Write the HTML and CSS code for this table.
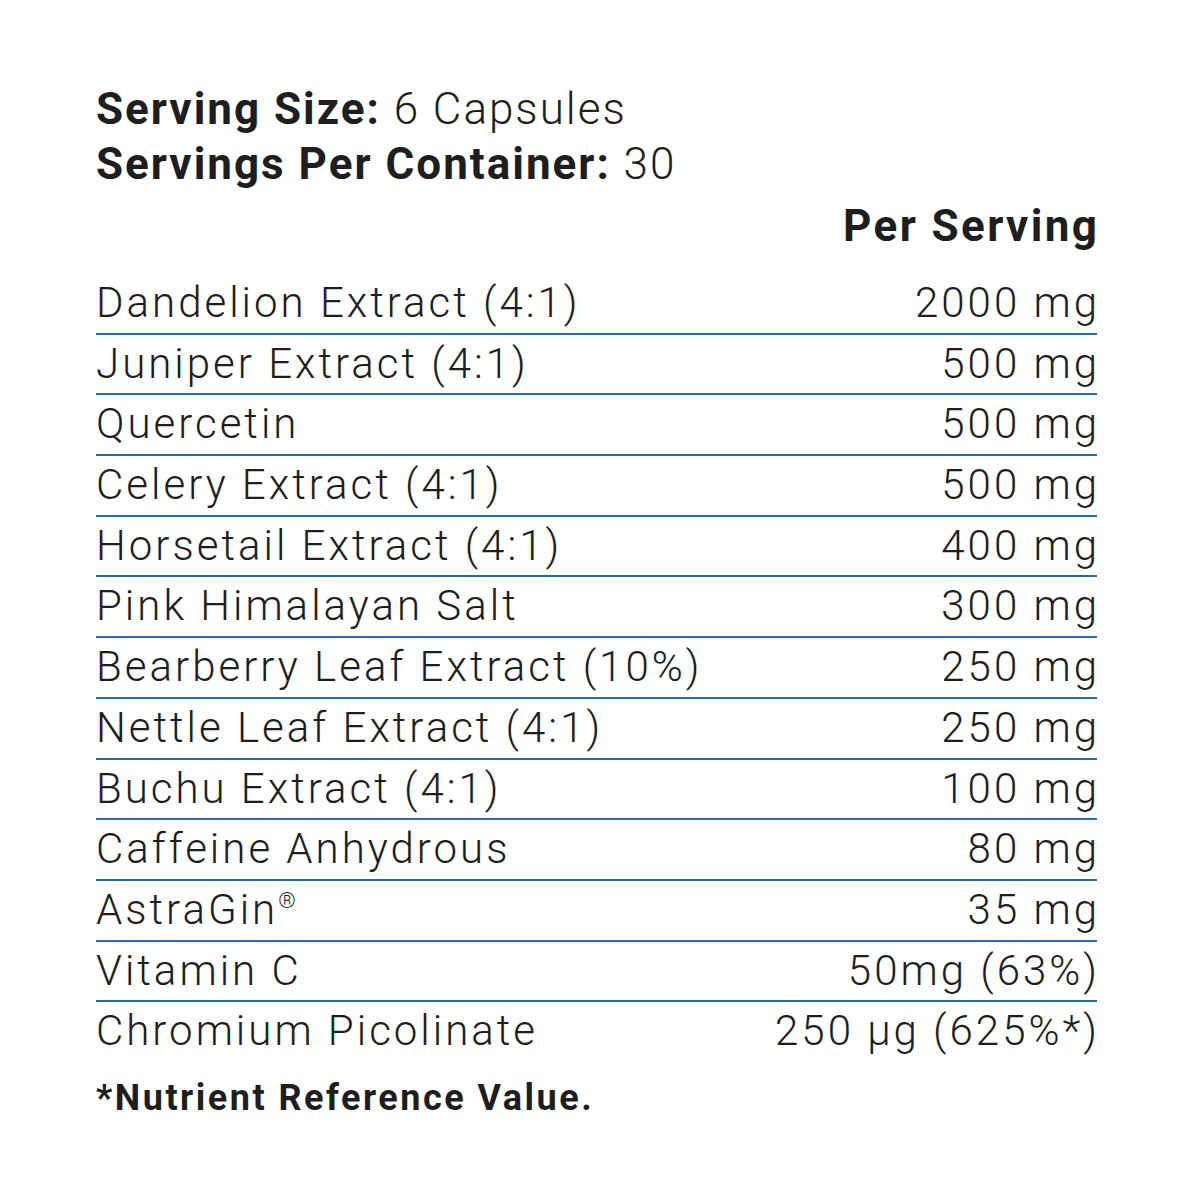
FILE: index.html
```html
<!DOCTYPE html>
<html>
<head>
<meta charset="utf-8">
<link rel="stylesheet" href="styles.css">
</head>
<body>
<div class="panel">
  <div class="serving"><b>Serving Size:</b> 6 Capsules</div>
  <div class="serving"><b>Servings Per Container:</b> 30</div>
  <div class="head"><span class="val">Per Serving</span></div>
  <div class="table">
    <div class="row"><span>Dandelion Extract (4:1)</span><span class="val">2000 mg</span></div>
    <div class="row"><span>Juniper Extract (4:1)</span><span class="val">500 mg</span></div>
    <div class="row"><span>Quercetin</span><span class="val">500 mg</span></div>
    <div class="row"><span>Celery Extract (4:1)</span><span class="val">500 mg</span></div>
    <div class="row"><span>Horsetail Extract (4:1)</span><span class="val">400 mg</span></div>
    <div class="row"><span>Pink Himalayan Salt</span><span class="val">300 mg</span></div>
    <div class="row"><span>Bearberry Leaf Extract (10%)</span><span class="val">250 mg</span></div>
    <div class="row"><span>Nettle Leaf Extract (4:1)</span><span class="val">250 mg</span></div>
    <div class="row"><span>Buchu Extract (4:1)</span><span class="val">100 mg</span></div>
    <div class="row"><span>Caffeine Anhydrous</span><span class="val">80 mg</span></div>
    <div class="row"><span>AstraGin<sup class="reg">®</sup></span><span class="val">35 mg</span></div>
    <div class="row"><span>Vitamin C</span><span class="val">50mg (63%)</span></div>
    <div class="row last"><span>Chromium Picolinate</span><span class="val">250 µg (625%*)</span></div>
  </div>
  <div class="note">*Nutrient Reference Value.</div>
</div>
</body>
</html>
```
FILE: styles.css
```css
html, body {
  margin: 0;
  padding: 0;
  background: #ffffff;
}
body {
  font-family: Roboto, "Liberation Sans", sans-serif;
  color: #1e1e1e;
}
.panel {
  width: 1001px;
  margin-left: 96px;
  padding-top: 82px;
}
.serving {
  font-size: 44px;
  line-height: 55px;
  font-weight: 300;
  letter-spacing: 2px;
}
.serving b {
  font-weight: 700;
}
.head {
  text-align: right;
  font-size: 44px;
  font-weight: 700;
  line-height: 60px;
  margin-top: 4px;
  letter-spacing: 2.4px;
}
.head .val {
  margin-right: -2.4px;
}
.table {
  margin-top: 18px;
}
.row {
  display: flex;
  justify-content: space-between;
  align-items: baseline;
  height: 58.7px;
  line-height: 58.7px;
  font-size: 42px;
  font-weight: 300;
  letter-spacing: 3px;
  border-bottom: 2px solid #2a68b0;
}
.row .val {
  margin-right: -3px;
}
.row.last {
  border-bottom: none;
}
.reg {
  font-size: 22px;
  line-height: 0;
  vertical-align: 16px;
  letter-spacing: 0;
}
.note {
  font-size: 36px;
  font-weight: 700;
  letter-spacing: 2.5px;
  margin-top: 16px;
}
```
